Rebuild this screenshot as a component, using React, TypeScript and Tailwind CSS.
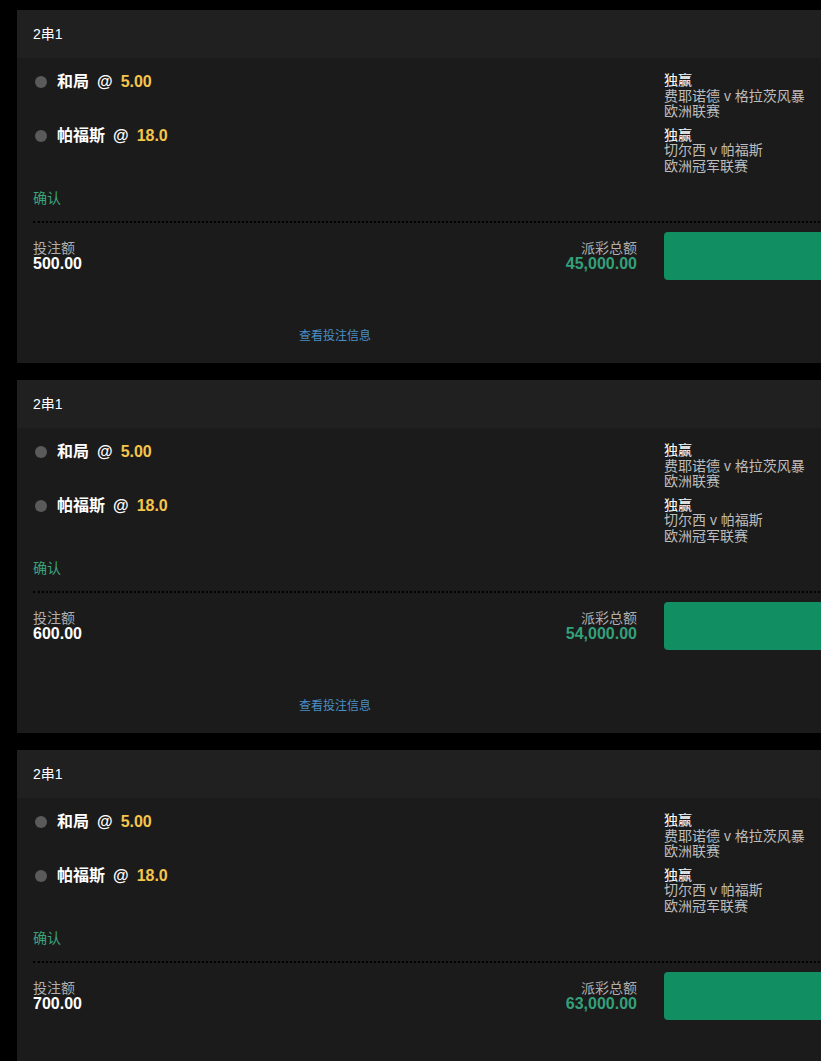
import React from 'react';

interface Leg {
  pick: string;
  odds: string;
  market: string;
  event: string;
  league: string;
}

const legs: Leg[] = [
  { pick: '和局', odds: '5.00', market: '独赢', event: '费耶诺德 v 格拉茨风暴', league: '欧洲联赛' },
  { pick: '帕福斯', odds: '18.0', market: '独赢', event: '切尔西 v 帕福斯', league: '欧洲冠军联赛' },
];

const bets = [
  { stake: '500.00', payout: '45,000.00' },
  { stake: '600.00', payout: '54,000.00' },
  { stake: '700.00', payout: '63,000.00' },
];

function BetCard({ stake, payout }: { stake: string; payout: string }) {
  return (
    <div className="w-[963px] shrink-0">
      <div className="h-12 bg-[#202020] px-4 flex items-center text-[14px] text-white">2串1</div>
      <div className="bg-[#1b1b1b] px-4 pt-[15px] pb-[19px]">
        <div className="flex flex-col gap-2">
          {legs.map((leg) => (
            <div key={leg.pick} className="flex items-start gap-[27px]">
              <div className="w-[604px] flex items-center h-[17px]">
                <span className="ml-[2px] w-[12px] h-[12px] rounded-full bg-[#5a5a5a]" />
                <div className="ml-[10px] flex items-center gap-2 text-[16px] leading-4 font-bold">
                  <span className="text-white">{leg.pick}</span>
                  <span className="text-white">@</span>
                  <span className="text-[#f5c54c]">{leg.odds}</span>
                </div>
              </div>
              <div className="flex flex-col text-[14px] leading-[15.5px]">
                <span className="text-white font-normal">{leg.market}</span>
                <span className="text-[#bdbdbd]">{leg.event}</span>
                <span className="text-[#bdbdbd]">{leg.league}</span>
              </div>
            </div>
          ))}
        </div>
        <div className="mt-4 text-[14px] leading-4 text-[#3aa57c]">确认</div>
        <div className="mt-[15px] border-t-2 border-dotted border-black" />
        <div className="pt-[9px] flex items-center gap-[27px]">
          <div className="w-[604px] flex items-center justify-between">
            <div className="flex flex-col">
              <span className="text-[14px] leading-4 text-[#b0b0b0]">投注额</span>
              <span className="text-[16px] leading-4 font-bold text-white">{stake}</span>
            </div>
            <div className="flex flex-col items-end">
              <span className="text-[14px] leading-4 text-[#b0b0b0]">派彩总额</span>
              <span className="text-[16px] leading-4 font-bold text-[#33a07a]">{payout}</span>
            </div>
          </div>
          <div className="h-12 w-[300px] rounded-[4px] bg-[#128e63]" />
        </div>
        <div className="w-[604px] mt-[48px] text-center text-[12px] leading-4 text-[#4a8fc6]">
          查看投注信息
        </div>
      </div>
    </div>
  );
}

export default function App() {
  return (
    <div
      className="min-h-screen w-full overflow-hidden bg-black pl-[17px] pt-[10px]"
      style={{ fontFamily: '"Liberation Sans", "Noto Sans CJK SC", sans-serif' }}
    >
      <div className="flex flex-col gap-[17px] w-max">
        {bets.map((b) => (
          <BetCard key={b.stake} stake={b.stake} payout={b.payout} />
        ))}
      </div>
    </div>
  );
}
